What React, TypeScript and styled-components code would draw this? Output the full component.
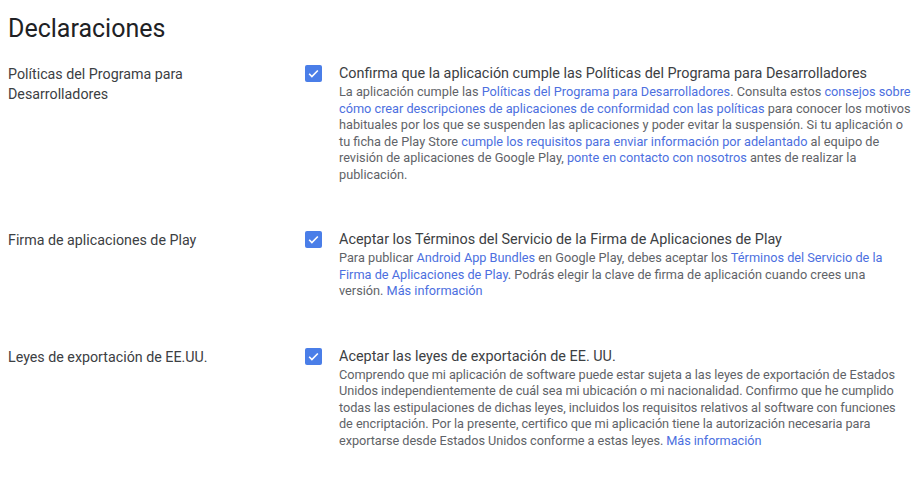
import React from 'react';
import styled, { createGlobalStyle } from 'styled-components';

const GlobalStyle = createGlobalStyle`
    body {
        margin: 0;
        background: #ffffff;
        font-family: Roboto, "Liberation Sans", Arial, sans-serif;
    }
`;

const SPage = styled.div`
    width: 920px;
    padding: 13px 8px 0 8px;
    box-sizing: border-box;
`;

const STitle = styled.h1`
    margin: 0;
    font-size: 25px;
    line-height: 32px;
    font-weight: 400;
    color: #202124;
`;

const SRow = styled.div`
    display: grid;
    grid-template-columns: 297px 34px 1fr;
    padding: 17px 0 28px 0;
`;

const SLabel = styled.div`
    font-size: 14.25px;
    line-height: 20px;
    color: #3c4043;
    padding-top: 2px;
`;

const SCheckbox = styled.div`
    width: 17px;
    height: 17px;
    margin-top: 3px;
    border-radius: 2px;
    background: #4a7ee8;
    display: flex;
    align-items: center;
    justify-content: center;
`;

const SContent = styled.div`
    display: flex;
    flex-direction: column;
`;

const SHeading = styled.div`
    font-size: 14.4px;
    line-height: 20px;
    padding-top: 2px;
    color: #3c4043;
`;

const SText = styled.div<{ $tight?: boolean }>`
    font-size: 12.72px;
    line-height: 16.5px;
    letter-spacing: ${({ $tight }) => ($tight ? '-0.06px' : '0')};
    color: #5f6368;
`;

const SLink = styled.a`
    color: #4c6fe0;
    text-decoration: none;
`;

const Check = () => (
    <SCheckbox>
        <svg width="13" height="13" viewBox="0 0 24 24">
            <path d="M4 12.5l5 5L20 6.5" fill="none" stroke="#ffffff" strokeWidth="3" />
        </svg>
    </SCheckbox>
);

const App = () => (
    <SPage>
        <GlobalStyle />
        <STitle>Declaraciones</STitle>

        <SRow>
            <SLabel>Políticas del Programa para<br />Desarrolladores</SLabel>
            <Check />
            <SContent>
                <SHeading>Confirma que la aplicación cumple las Políticas del Programa para Desarrolladores</SHeading>
                <SText>
                    La aplicación cumple las <SLink>Políticas del Programa para Desarrolladores</SLink>. Consulta estos{' '}
                    <SLink>consejos sobre cómo crear descripciones de aplicaciones de conformidad con las políticas</SLink> para
                    conocer los motivos habituales por los que se suspenden las aplicaciones y poder evitar la suspensión. Si tu
                    aplicación o tu ficha de Play Store <SLink>cumple los requisitos para enviar información por adelantado</SLink> al
                    equipo de revisión de aplicaciones de Google Play, <SLink>ponte en contacto con nosotros</SLink> antes de realizar
                    la publicación.
                </SText>
            </SContent>
        </SRow>

        <SRow>
            <SLabel>Firma de aplicaciones de Play</SLabel>
            <Check />
            <SContent>
                <SHeading>Aceptar los Términos del Servicio de la Firma de Aplicaciones de Play</SHeading>
                <SText>
                    Para publicar <SLink>Android App Bundles</SLink> en Google Play, debes aceptar los{' '}
                    <SLink>Términos del Servicio de la Firma de Aplicaciones de Play</SLink>. Podrás elegir la clave de firma de
                    aplicación cuando crees una versión. <SLink>Más información</SLink>
                </SText>
            </SContent>
        </SRow>

        <SRow>
            <SLabel>Leyes de exportación de EE.UU.</SLabel>
            <Check />
            <SContent>
                <SHeading>Aceptar las leyes de exportación de EE. UU.</SHeading>
                <SText $tight>
                    Comprendo que mi aplicación de software puede estar sujeta a las leyes de exportación de Estados Unidos
                    independientemente de cuál sea mi ubicación o mi nacionalidad. Confirmo que he cumplido todas las
                    estipulaciones de dichas leyes, incluidos los requisitos relativos al software con funciones de
                    encriptación. Por la presente, certifico que mi aplicación tiene la autorización necesaria para exportarse
                    desde Estados Unidos conforme a estas leyes. <SLink>Más información</SLink>
                </SText>
            </SContent>
        </SRow>
    </SPage>
);

export default App;
